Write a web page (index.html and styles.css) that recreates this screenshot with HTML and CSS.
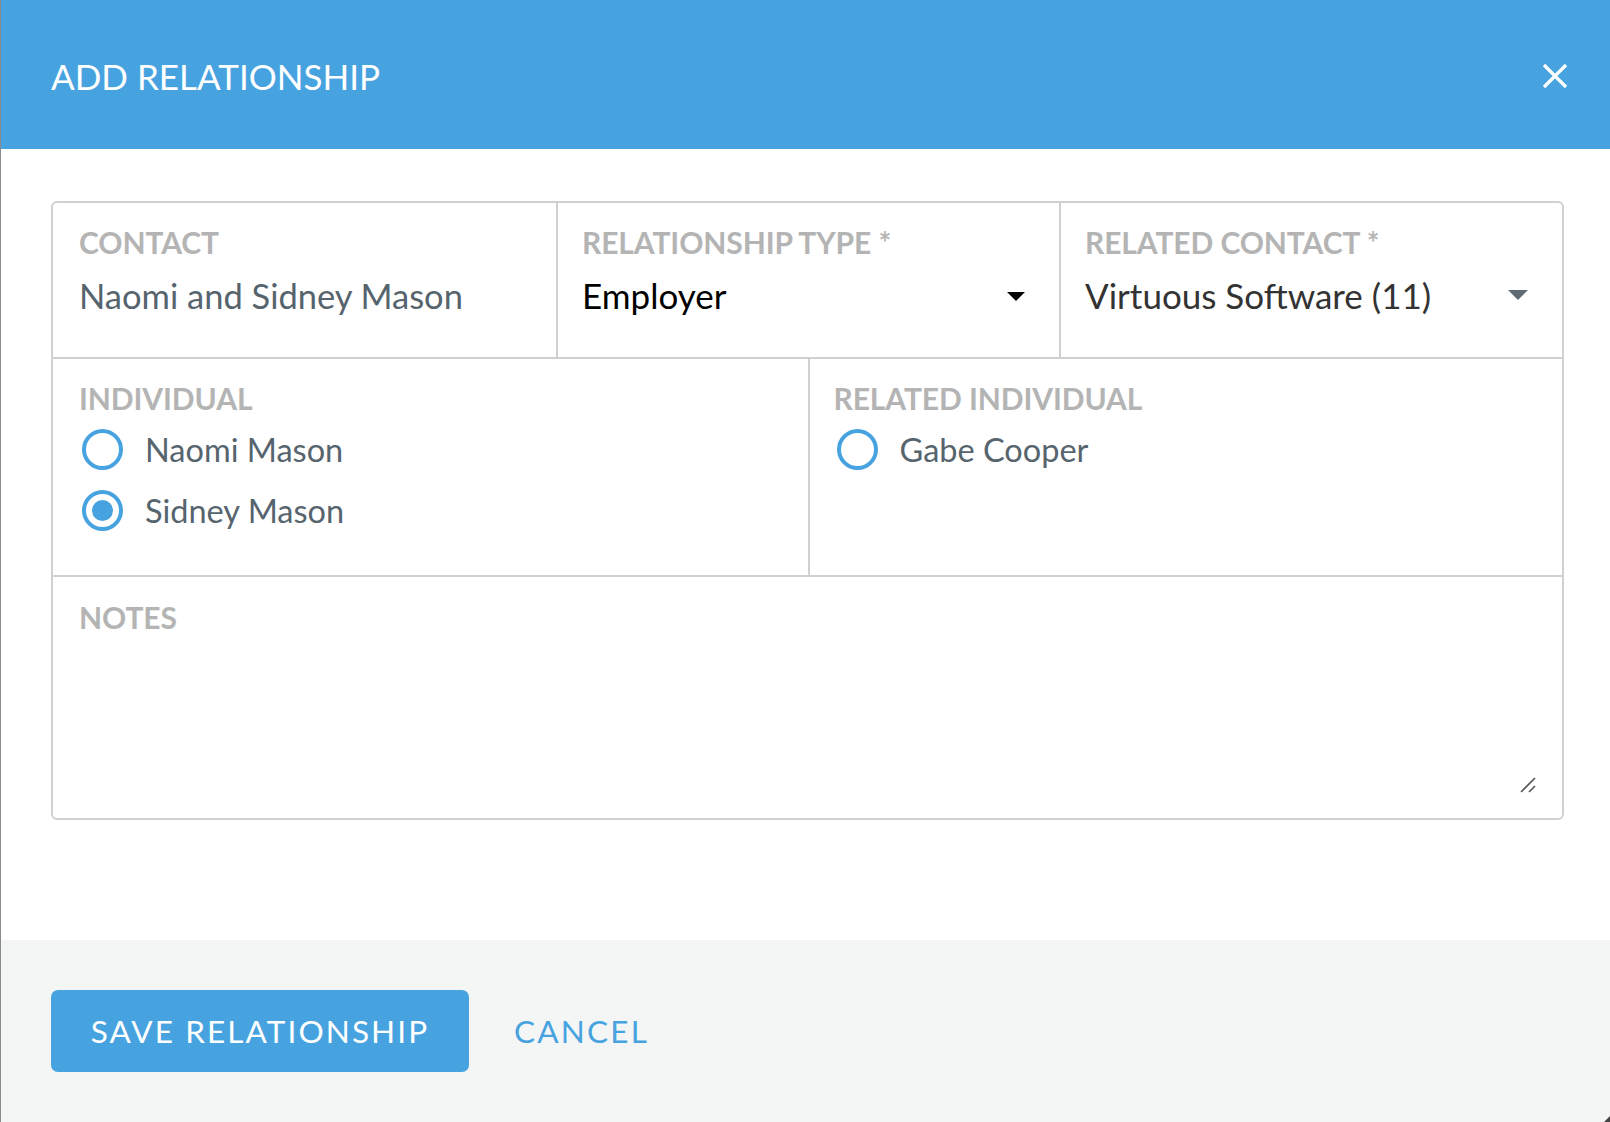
FILE: index.html
```html
<!DOCTYPE html>
<html lang="en">
<head>
<meta charset="utf-8">
<title>Add Relationship</title>
<link rel="stylesheet" href="styles.css">
</head>
<body>
<div class="dialog">
  <header class="dialog-header">
    <h1 class="dialog-title">ADD RELATIONSHIP</h1>
    <button class="close-btn" aria-label="Close">
      <svg width="26" height="26" viewBox="0 0 26 26"><path d="M2 2 L24 24 M24 2 L2 24" stroke="#fff" stroke-width="3.2" fill="none"/></svg>
    </button>
  </header>
  <main class="dialog-body">
    <div class="form-box">
      <div class="row row-top">
        <div class="cell">
          <div class="label">CONTACT</div>
          <div class="value value-muted contact-value">Naomi and Sidney Mason</div>
        </div>
        <div class="cell">
          <div class="label">RELATIONSHIP TYPE *</div>
          <div class="select">
            <span class="value value-black">Employer</span>
            <span class="caret caret-black"></span>
          </div>
        </div>
        <div class="cell">
          <div class="label">RELATED CONTACT *</div>
          <div class="select">
            <span class="value value-dark">Virtuous Software (11)</span>
            <span class="caret caret-gray"></span>
          </div>
        </div>
      </div>
      <div class="row row-mid">
        <div class="cell">
          <div class="label">INDIVIDUAL</div>
          <div class="radios">
            <label class="radio"><span class="radio-dot"></span><span class="radio-text">Naomi Mason</span></label>
            <label class="radio"><span class="radio-dot checked"></span><span class="radio-text">Sidney Mason</span></label>
          </div>
        </div>
        <div class="cell">
          <div class="label">RELATED INDIVIDUAL</div>
          <div class="radios">
            <label class="radio"><span class="radio-dot"></span><span class="radio-text">Gabe Cooper</span></label>
          </div>
        </div>
      </div>
      <div class="row row-notes">
        <div class="cell notes-cell">
          <div class="label">NOTES</div>
          <div class="notes-wrap">
            <textarea class="notes"></textarea>
            <svg class="grip" width="16" height="16" viewBox="0 0 16 16"><path d="M1 15 L15 1 M9 15 L15 9" stroke="#555" stroke-width="1.6" fill="none"/></svg>
          </div>
        </div>
      </div>
    </div>
  </main>
  <footer class="dialog-footer">
    <button class="btn-primary">SAVE RELATIONSHIP</button>
    <button class="btn-link">CANCEL</button>
  </footer>
</div>
</body>
</html>
```
FILE: styles.css
```css
html, body {
  margin: 0;
  padding: 0;
  background: #fff;
}
body {
  font-family: Lato, "Open Sans", "Liberation Sans", sans-serif;
}
.dialog {
  width: 1610px;
  height: 1122px;
  box-sizing: border-box;
  border-left: 1px solid #8a8a8a;
  display: flex;
  flex-direction: column;
  overflow: hidden;
}
.dialog-header {
  height: 149px;
  flex: none;
  background: #47a3df;
  display: flex;
  align-items: center;
  justify-content: space-between;
  padding: 2px 42px 0 50px;
  box-sizing: border-box;
}
.dialog-title {
  margin: 0;
  color: #fff;
  font-weight: 400;
  font-size: 35px;
  letter-spacing: 0;
}
.close-btn {
  background: none;
  border: 0;
  padding: 0;
  width: 26px;
  height: 26px;
  display: flex;
  cursor: pointer;
}
.dialog-body {
  flex: 1;
  padding: 52px 46px 0 50px;
}
.form-box {
  border: 2px solid #d0d0d0;
  border-radius: 6px;
}
.row {
  display: grid;
  border-bottom: 2px solid #d0d0d0;
}
.row-top { grid-template-columns: 1fr 1fr 1fr; height: 154px; }
.row-mid { grid-template-columns: 1fr 1fr; height: 216px; }
.row-notes { border-bottom: 0; height: 241px; }
.cell {
  padding: 22px 34px 0 24px;
  border-left: 2px solid #d0d0d0;
  min-width: 0;
}
.cell:first-child {
  border-left: 0;
  padding-left: 26px;
}
.label {
  font-weight: 700;
  font-size: 30px;
  line-height: 34px;
  color: #b4b4b4;
  letter-spacing: -0.1px;
  white-space: nowrap;
}
.value {
  font-size: 35px;
  line-height: 41px;
  white-space: nowrap;
}
.contact-value {
  font-size: 34.5px;
  margin-top: 16px;
}
.value-muted { color: #56646e; }
.value-black { color: #000; }
.value-dark { color: #333; }
.select {
  margin-top: 16px;
  display: flex;
  align-items: center;
  justify-content: space-between;
}
.caret {
  width: 0;
  height: 0;
  margin-top: 2px;
}
.caret-black {
  border-left: 9px solid transparent;
  border-right: 9px solid transparent;
  border-top: 9px solid #000;
}
.caret-gray {
  border-left: 10px solid transparent;
  border-right: 10px solid transparent;
  border-top: 10px solid #5e6b74;
  margin-top: -2px;
}
.radios {
  margin-top: 14px;
  padding-left: 3px;
  display: flex;
  flex-direction: column;
  gap: 20px;
}
.radio {
  display: flex;
  align-items: center;
  gap: 22px;
}
.radio-text {
  font-size: 32.5px;
  line-height: 41px;
  color: #56646e;
  white-space: nowrap;
}
.radio-dot {
  width: 41px;
  height: 41px;
  box-sizing: border-box;
  border: 4px solid #47a3df;
  border-radius: 50%;
  background: #fff;
  flex: none;
  position: relative;
}
.radio-dot.checked::after {
  content: "";
  position: absolute;
  left: 6px;
  top: 6px;
  width: 21px;
  height: 21px;
  border-radius: 50%;
  background: #47a3df;
}
.notes-cell {
  display: flex;
  flex-direction: column;
  padding: 23px 26px 25px 26px;
}
.notes-wrap {
  flex: 1;
  margin-top: 8px;
  position: relative;
  display: flex;
}
.notes {
  flex: 1;
  border: 0;
  outline: none;
  resize: none;
  font-family: inherit;
  font-size: 30px;
  padding: 0;
}
.grip {
  position: absolute;
  right: 0;
  bottom: 0;
}
.dialog-footer {
  height: 182px;
  flex: none;
  background: #f4f6f6;
  display: flex;
  align-items: center;
  gap: 45px;
  padding: 0 0 0 50px;
  position: relative;
}
.dialog-footer::after {
  content: "";
  position: absolute;
  right: 0;
  bottom: 0;
  width: 0;
  height: 0;
  border-left: 6px solid transparent;
  border-bottom: 6px solid #444;
}
.btn-primary {
  width: 418px;
  height: 82px;
  border: 0;
  border-radius: 7px;
  background: #47a3df;
  color: #fff;
  font-family: Lato, "Open Sans", sans-serif;
  font-size: 31.5px;
  letter-spacing: 2.1px;
  padding: 0;
}
.btn-link {
  border: 0;
  background: none;
  color: #47a3df;
  font-family: Lato, "Open Sans", sans-serif;
  font-size: 31.5px;
  letter-spacing: 2.2px;
  padding: 0;
}
```
